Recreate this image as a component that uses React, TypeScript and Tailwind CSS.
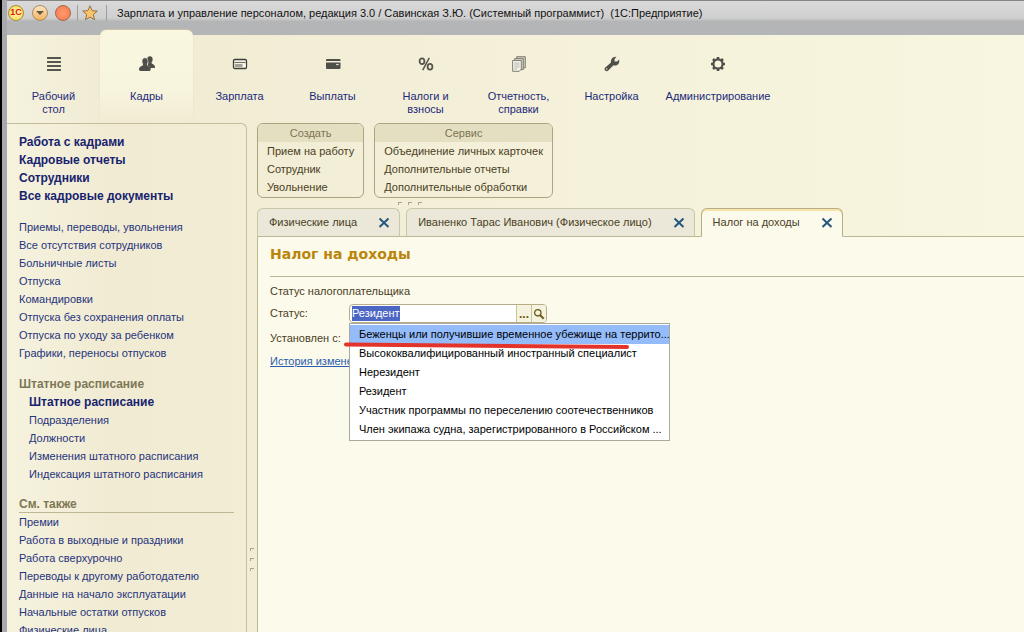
import React, { useEffect, useRef, useState } from 'react';

interface Section {
  label: string;
  icon: React.ReactNode;
}

interface MenuGroup {
  title: string;
  items: string[];
}

const sections: Section[] = [
  { label: 'Рабочий стол', icon: <LinesIcon /> },
  { label: 'Кадры', icon: <PeopleIcon /> },
  { label: 'Зарплата', icon: <PayrollIcon /> },
  { label: 'Выплаты', icon: <CardIcon /> },
  { label: 'Налоги и взносы', icon: <PercentIcon /> },
  { label: 'Отчетность, справки', icon: <ReportsIcon /> },
  { label: 'Настройка', icon: <WrenchIcon /> },
  { label: 'Администрирование', icon: <GearIcon /> },
];

const mainLinks = ['Работа с кадрами', 'Кадровые отчеты', 'Сотрудники', 'Все кадровые документы'];

const documentLinks = [
  'Приемы, переводы, увольнения',
  'Все отсутствия сотрудников',
  'Больничные листы',
  'Отпуска',
  'Командировки',
  'Отпуска без сохранения оплаты',
  'Отпуска по уходу за ребенком',
  'Графики, переносы отпусков',
];

const staffLinks = [
  'Подразделения',
  'Должности',
  'Изменения штатного расписания',
  'Индексация штатного расписания',
];

const seeAlsoLinks = [
  'Премии',
  'Работа в выходные и праздники',
  'Работа сверхурочно',
  'Переводы к другому работодателю',
  'Данные на начало эксплуатации',
  'Начальные остатки отпусков',
  'Физические лица',
];

const menuGroups: MenuGroup[] = [
  { title: 'Создать', items: ['Прием на работу', 'Сотрудник', 'Увольнение'] },
  {
    title: 'Сервис',
    items: ['Объединение личных карточек', 'Дополнительные отчеты', 'Дополнительные обработки'],
  },
];

const openTabs = ['Физические лица', 'Иваненко Тарас Иванович (Физическое лицо)', 'Налог на доходы'];

const statuses = [
  'Беженцы или получившие временное убежище на террито...',
  'Высококвалифицированный иностранный специалист',
  'Нерезидент',
  'Резидент',
  'Участник программы по переселению соотечественников',
  'Член экипажа судна, зарегистрированного в Российском ...',
];

function LinesIcon() {
  return (
    <svg className="h-4 w-4" viewBox="0 0 16 16" fill="#55544d">
      <rect x="1" y="1" width="14" height="1.900" rx="0.500" />
      <rect x="1" y="5" width="14" height="1.900" rx="0.500" />
      <rect x="1" y="9" width="14" height="1.900" rx="0.500" />
      <rect x="1" y="13" width="14" height="1.900" rx="0.500" />
    </svg>
  );
}

function PeopleIcon() {
  return (
    <svg className="h-4 w-4" viewBox="0 0 16 16" fill="#4f4e48">
      <ellipse cx="10.900" cy="3.500" rx="2.700" ry="3.200" />
      <path d="M9.600 6h2.600c.2 1.300 1.100 1.900 2.200 2.400 1.300.6 1.600 1.600 1.600 3.600h-4.800c-.4-1.400-1.300-2-2.600-2.600z" />
      <ellipse cx="6" cy="5.400" rx="3" ry="3.600" stroke="#f8f6e0" strokeWidth="0.500" />
      <path d="M4.200 8h3.600c.1 1.400.9 1.900 1.900 2.300 1.500.6 2 1.500 2 3 0 1.200-.5 1.700-1.600 1.700H1.700C.6 15 0 14.500 0 13.300c0-1.500.7-2.400 2.200-3 1-.4 1.900-.9 2-2.300z" />
    </svg>
  );
}

function PayrollIcon() {
  return (
    <svg className="h-4 w-4" viewBox="0 0 16 16">
      <rect x="1.500" y="3.500" width="13" height="9" rx="1.300" fill="#f4f1dc" stroke="#3f3f3c" strokeWidth="1.300" />
      <path d="M2.500 6.500h11" stroke="#6f6e66" />
      <path d="M3 9.500h7.500" stroke="#a3a196" strokeWidth="3" />
      <path d="M11 8h2.500v3H11z" fill="#fbfaf0" />
    </svg>
  );
}

function CardIcon() {
  return (
    <svg className="h-4 w-4" viewBox="0 0 16 16" fill="#4f4f4a">
      <path d="M2 3h12.500q1 0 1 1v1H1V4q0-1 1-1z" />
      <path d="M1 6.500h14.500V12q0 1-1 1H2q-1 0-1-1z" />
      <path d="M11 8.500h2.800" stroke="#d8d5c0" strokeWidth="1.200" />
    </svg>
  );
}

function PercentIcon() {
  return (
    <svg className="h-4 w-4" viewBox="0 0 16 16" fill="none" stroke="#55544d">
      <ellipse cx="4" cy="5.200" rx="2.400" ry="2.900" strokeWidth="1.800" />
      <ellipse cx="12" cy="10.800" rx="2.400" ry="2.900" strokeWidth="1.800" />
      <path d="M11.300 1.800 4.700 14.200" strokeWidth="1.500" />
    </svg>
  );
}

function ReportsIcon() {
  return (
    <svg className="h-4 w-4" viewBox="0 0 16 16" fill="#d5d2c0" stroke="#76746a" strokeWidth="0.900">
      <path d="M5.700.7h8.600v11.100H5.700z" />
      <path d="M3.700 2.600h8.600v11H3.700z" />
      <path d="M1.600 4.500h8.700v8.600l-2 2.200H1.600z" fill="#f4f3e8" />
      <path d="M3.200 7h5.400M3.200 9h5.400M3.200 11h5.400M3.200 13h3" stroke="#b3b1a6" />
    </svg>
  );
}

function WrenchIcon() {
  return (
    <svg className="h-4 w-4" viewBox="0 0 16 16" fill="#4f4f4a">
      <path
        d="M12.400.8 10.600 3v2.400h2.500l2-1.900c.7 2.900-.7 5.500-3.200 6-.9.2-1.800.1-2.500-.2L4.300 14.500c-.9.900-2.300.9-3.100.1-.9-.9-.9-2.300.1-3.100L7 6.400C6.500 3.300 8.900.2 12.400.8zM2.800 12.300a.7.7 0 1 0 0 1.400.7.7 0 0 0 0-1.400z"
        fillRule="evenodd"
      />
    </svg>
  );
}

function GearIcon() {
  return (
    <svg className="h-4 w-4" viewBox="0 0 16 16" fill="none" stroke="#4f4f4a">
      <circle cx="8" cy="8" r="4.600" strokeWidth="2.200" />
      <path
        d="M8 1v2.400M8 12.600V15M1 8h2.400M12.600 8H15M3 3l1.700 1.700M11.300 11.300 13 13M13 3l-1.700 1.700M4.700 11.300 3 13"
        strokeWidth="2.600"
      />
    </svg>
  );
}

function CloseIcon() {
  return (
    <svg className="h-3 w-3" viewBox="0 0 12 12" stroke="#24577d" strokeWidth="2">
      <path d="M1.500 1.500l9 8.500M10.500 1.500l-9 8.500" />
    </svg>
  );
}

// Small corner marks that show where a splitter can be dragged
function Grip({ className }: { className: string }) {
  return (
    <div className={`flex ${className}`}>
      {[0, 1, 2].map(i => (
        <span key={i} className="h-[3px] w-1 border-t border-l border-[#aaa588]"></span>
      ))}
    </div>
  );
}

function TitleBar() {
  return (
    <header className="flex h-[35px] items-start border-t border-[#858585] bg-linear-to-b from-[#d9d9d9] via-[#cfcfcf] via-50% to-[#b4b5b6] to-60%">
      <div className="flex h-6 items-center">
        <button aria-label="Главное меню" className="ml-px flex h-4 w-4 items-center justify-center rounded-full border border-[#ad8b35] bg-radial from-[#fff9b0] to-[#f8cf3a] text-[9px] font-bold text-[#e0190d]">
          1С
        </button>
        <button aria-label="Свернуть" className="ml-2 flex h-4 w-4 items-center justify-center rounded-full border border-[#a98c63] bg-linear-to-b from-[#fbe7c5] to-[#f1b25c]">
          <svg className="h-2 w-2" viewBox="0 0 8 8" fill="#65543e">
            <path d="M0 2h8L4 6z" />
          </svg>
        </button>
        <button aria-label="Закрыть" className="ml-[7px] h-4 w-4 rounded-full border border-[#a6654d] bg-radial from-[#ff9a70] to-[#f57848]"></button>
        <span className="ml-1.5 h-4 w-px bg-[#9d9d9d]"></span>
        <button aria-label="Избранное" className="mx-1">
          <svg className="h-4 w-4" viewBox="0 0 16 16" fill="#ffc36a" stroke="#8e7349" strokeWidth="1">
            <path d="M8 .8l2.100 4.900 5.200.4-4 3.400 1.300 5.300L8 12l-4.600 2.800 1.300-5.300-4-3.400 5.200-.4z" />
          </svg>
        </button>
        <span className="ml-1 h-4 w-px bg-[#9d9d9d]"></span>
        <h1 className="ml-2.5 text-[11px] leading-4 whitespace-pre text-[#111]">
          Зарплата и управление персоналом, редакция 3.0 / Савинская З.Ю. (Системный программист)  (1С:Предприятие)
        </h1>
      </div>
    </header>
  );
}

function SectionBar() {
  const [active, setActive] = useState(1);

  return (
    <nav className="-mt-[5px] flex h-[93px] text-[#1c2a7c]">
      {sections.map((section, i) => (
        <button
          key={section.label}
          onClick={() => setActive(i)}
          className={`flex flex-col items-center rounded-t-md pt-[26px] leading-[13px] ${
            i === sections.length - 1 ? 'w-[120px]' : 'w-[93px] px-3'
          } ${
            i === active
              ? 'bg-linear-to-b from-[#f9f7e0] via-[#f8f5de] via-60% to-[#f1ebd3] shadow-[0_-1px_1px_#c9c4a8]'
              : ''
          }`}
        >
          {section.icon}
          <span className="mt-[18px]">{section.label}</span>
        </button>
      ))}
    </nav>
  );
}

function LinkList({ items }: { items: string[] }) {
  return (
    <ul>
      {items.map(item => (
        <li key={item}>
          <a href="#" className="hover:underline">{item}</a>
        </li>
      ))}
    </ul>
  );
}

function Sidebar() {
  return (
    <aside className="w-60 shrink-0 overflow-hidden rounded-tr-md border-t border-r border-[#c3bd99] px-3 pt-[9px] leading-[18px] whitespace-nowrap text-[#26347d]">
      <div className="text-[12px] font-bold text-[#17236f]">
        <LinkList items={mainLinks} />
      </div>
      <div className="mt-[13px]">
        <LinkList items={documentLinks} />
      </div>
      <h2 className="mt-[13px] text-[12px] font-bold text-[#7d7755]">Штатное расписание</h2>
      <div className="pl-2.5">
        <a href="#" className="block text-[12px] font-bold text-[#17236f]">Штатное расписание</a>
        <LinkList items={staffLinks} />
      </div>
      <h2 className="mt-[13px] border-b border-[#bdb792] text-[12px] leading-4 font-bold text-[#7d7755]">См. также</h2>
      <LinkList items={seeAlsoLinks} />
    </aside>
  );
}

function StatusField() {
  const inputRef = useRef<HTMLInputElement>(null);
  const [status, setStatus] = useState('Резидент');

  useEffect(() => {
    inputRef.current?.focus();
    inputRef.current?.select();
  }, []);

  return (
    <div className="relative">
      <div className="flex h-[19px] w-[198px] overflow-hidden rounded-sm border border-[#b5ae87] bg-white">
        <input
          id="status"
          ref={inputRef}
          value={status}
          onChange={e => setStatus(e.target.value)}
          className="min-w-0 flex-1 pl-0.5 text-[11px] leading-[15px] text-[#222] outline-none selection:bg-[#4c66c4] selection:text-white"
        />
        <button aria-label="Выбрать" className="flex w-[15px] items-end justify-center border-l border-[#c9c39f] bg-[#f5f2dd] text-[12px] leading-4 font-bold text-[#6c5a1c]">
          ...
        </button>
        <button aria-label="Открыть" className="flex w-[15px] items-center justify-center border-l border-[#c9c39f] bg-[#f5f2dd]">
          <svg className="h-3 w-3" viewBox="0 0 12 12" fill="none" stroke="#6c5a1c">
            <circle cx="4.800" cy="4.800" r="3.200" strokeWidth="1.300" />
            <path d="M7.200 7.200l3.500 3.500" strokeWidth="2" />
          </svg>
        </button>
      </div>
      <ul role="listbox" aria-label="Статус" className="absolute top-[19px] left-0 z-10 w-[321px] border border-[#a9a9a0] bg-white py-px leading-[19px] whitespace-nowrap text-black">
        {statuses.map((item, i) => (
          <li
            key={item}
            role="option"
            aria-selected={i === 0}
            onClick={() => setStatus(item)}
            className={`pl-[9px] ${i === 0 ? 'bg-[#94bcfb]' : ''}`}
          >
            {item}
          </li>
        ))}
      </ul>
      <svg className="pointer-events-none absolute top-[37px] -left-1.5 z-20 h-2 w-[288px]" viewBox="0 0 288 8">
        <path d="M3 3.500Q120 4 284 6" stroke="#e3342c" strokeWidth="4" strokeLinecap="round" fill="none" />
      </svg>
    </div>
  );
}

export default function App() {
  const [activeTab, setActiveTab] = useState(2);

  return (
    <div className="h-screen overflow-hidden border-l-2 border-black bg-[#a9a9ad] font-['Liberation_Sans',Arial,sans-serif] text-[11px] text-[#4a4024]">
      <div className="flex h-full flex-col pl-[5px]">
        <TitleBar />
        <div className="flex min-h-0 flex-1 flex-col bg-linear-to-r from-[#f5f2de] via-[#f1ebd3] via-10% to-[#f8f6e0]">
          <SectionBar />
          <div className="flex min-h-0 flex-1">
            <Sidebar />
            <div className="flex w-2.5 shrink-0 flex-col items-center">
              <Grip className="mt-[425px] flex-col gap-[7px]" />
            </div>
            <main className="flex min-w-0 flex-1 flex-col">
              <div className="flex gap-2.5">
                {menuGroups.map(group => (
                  <section key={group.title} className="overflow-hidden rounded-md border border-[#aaa580]">
                    <h2 className="bg-[#e5dfc2] text-center leading-[18px] text-[#7b7453]">{group.title}</h2>
                    <ul className="px-[9px] pb-px leading-[18px]">
                      {group.items.map(item => (
                        <li key={item}>
                          <button>{item}</button>
                        </li>
                      ))}
                    </ul>
                  </section>
                ))}
              </div>
              <Grip className="mt-1 ml-[141px] gap-1.5" />
              <div className="relative z-10 mt-[3px] -mb-px flex gap-1.5">
                {openTabs.map((tab, i) => (
                  <div
                    key={tab}
                    className={`flex h-[29px] items-center rounded-t-md border ${
                      i === activeTab
                        ? 'border-[#b5ae87] border-b-[#fcfaeb] bg-[#fcfaeb] shadow-[inset_0_2px_0_#fae3a6]'
                        : 'border-[#cbc6a8] border-b-[#bdb792] bg-[#ebe8d9]'
                    }`}
                  >
                    <button onClick={() => setActiveTab(i)} className="pr-[21px] pl-[11px]">{tab}</button>
                    <button aria-label="Закрыть вкладку" className="pr-[9px]">
                      <CloseIcon />
                    </button>
                  </div>
                ))}
              </div>
              <div className="flex-1 border-t border-l border-[#bdb792] bg-[#fcfaeb] pt-1.5 pl-3">
                <h2 className="border-b border-[#bdb792] pb-[11px] font-['DejaVu_Sans',sans-serif] text-[14px] leading-[22px] font-bold text-[#b9860b]">
                  Налог на доходы
                </h2>
                <p className="mt-1.5 leading-4">Статус налогоплательщика</p>
                <div className="mt-[5px] flex items-center">
                  <label htmlFor="status" className="w-[79px]">Статус:</label>
                  <StatusField />
                </div>
                <p className="mt-[7px] leading-4">Установлен с:</p>
                <a href="#" className="mt-[7px] inline-block leading-4 text-[#2a5db0] underline">
                  История измене
                </a>
              </div>
            </main>
          </div>
        </div>
      </div>
    </div>
  );
}
